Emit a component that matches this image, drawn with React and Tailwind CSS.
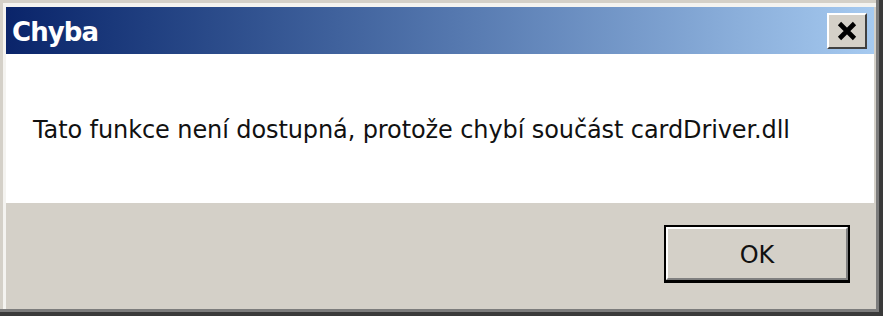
export default function App() {
  return (
    <div
      className="w-[883px] h-[316px] bg-[#d4d0c8] flex"
      style={{ fontFamily: '"DejaVu Sans", Verdana, sans-serif' }}
    >
      <div className="flex-1 flex border-r-[4px] border-b-[4px] border-[#3a3a3a]">
        <div className="flex-1 flex border-r-[3px] border-b-[3px] border-[#7c7c7c] pt-[3px] pl-[3px]">
          <div className="flex-1 flex flex-col border-t-[4px] border-l-[3px] border-[#f4f3f0] pr-[2px]">
            {/* Title bar */}
            <div className="h-[47px] flex items-center justify-between bg-gradient-to-r from-[#0a246a] to-[#a6caf0] pl-[6px] pr-[7px]">
              <span className="text-white font-bold text-[26px] tracking-[-0.9px] leading-none pt-[3px]">
                Chyba
              </span>
              <div className="w-[40px] h-[36px] bg-[#d4d0c8] border-t-[2px] border-l-[2px] border-t-white border-l-white border-r-[2px] border-b-[2px] border-r-[#404040] border-b-[#404040] flex items-center justify-center">
                <svg width="22" height="20" viewBox="0 0 22 20">
                  <path d="M3.5 2.5 L18.5 17.5 M18.5 2.5 L3.5 17.5" stroke="#000" strokeWidth="4.6" strokeLinecap="butt" />
                </svg>
              </div>
            </div>
            {/* Content */}
            <div className="h-[149px] bg-white flex items-center pl-[27px] pt-[2px]">
              <span className="text-[24px] text-[#111] tracking-[-0.1px]">
                Tato funkce není dostupná, protože chybí součást cardDriver.dll
              </span>
            </div>
            {/* Button area */}
            <div className="flex-1 flex justify-end items-start pt-[22px] pr-[24px]">
              <button className="w-[186px] h-[58px] border-[2px] border-black border-b-[3px] bg-[#d4d0c8] flex">
                <div className="flex-1 flex items-center justify-center border-t-[2px] border-l-[2px] border-white border-r-[2px] border-b-[2px] border-r-[#808080] border-b-[#808080] text-[24px] text-[#111] pt-[3px]">
                  OK
                </div>
              </button>
            </div>
          </div>
        </div>
      </div>
    </div>
  );
}
